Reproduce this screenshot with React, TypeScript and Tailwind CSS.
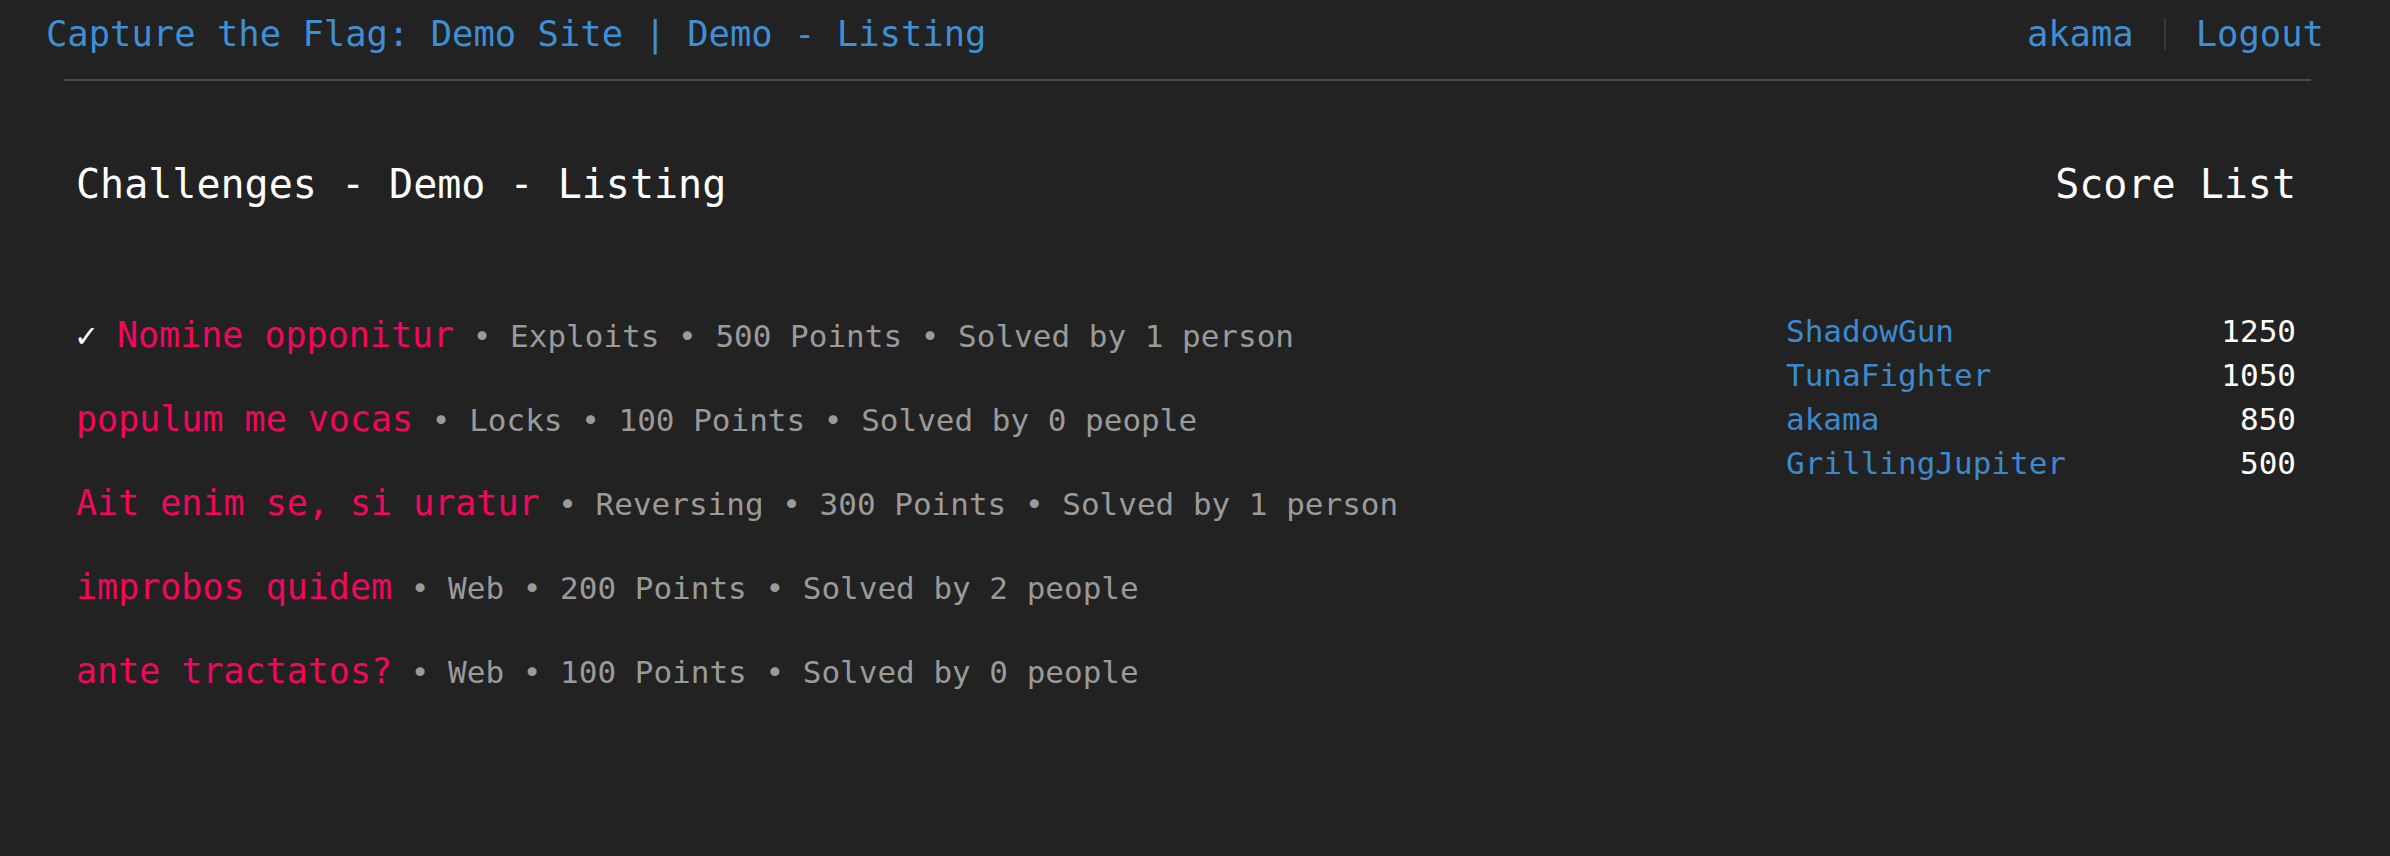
import React from 'react';

const mono = "font-['DejaVu_Sans_Mono','Liberation_Mono',monospace]";

const challenges = [
  { name: 'Nomine opponitur', category: 'Exploits', points: 500, solved: 'Solved by 1 person', done: true },
  { name: 'populum me vocas', category: 'Locks', points: 100, solved: 'Solved by 0 people', done: false },
  { name: 'Ait enim se, si uratur', category: 'Reversing', points: 300, solved: 'Solved by 1 person', done: false },
  { name: 'improbos quidem', category: 'Web', points: 200, solved: 'Solved by 2 people', done: false },
  { name: 'ante tractatos?', category: 'Web', points: 100, solved: 'Solved by 0 people', done: false },
];

const scores = [
  { name: 'ShadowGun', score: 1250 },
  { name: 'TunaFighter', score: 1050 },
  { name: 'akama', score: 850 },
  { name: 'GrillingJupiter', score: 500 },
];

function ChallengeRow({ c }: { key?: React.Key; c: (typeof challenges)[number] }) {
  return (
    <div className="h-[84px] flex items-center">
      <div className="whitespace-pre leading-[40px]">
        {c.done && <span className="text-white text-[34px]">✓ </span>}
        <a href="#" className="text-[#f2075b] text-[35px]">{c.name}</a>
        <span className="text-[#9a9a9a] text-[31px]">
          {' • '}{c.category}{' • '}{c.points} Points{' • '}{c.solved}
        </span>
      </div>
    </div>
  );
}

export default function App() {
  return (
    <div className={`min-h-screen bg-[#222222] ${mono}`}>
      <header className="flex items-center justify-between h-[68px] pl-[46px] pr-[66px] text-[35.5px] text-[#3f8fd4]">
        <a href="#">Capture the Flag: Demo Site | Demo - Listing</a>
        <div className="flex items-center">
          <a href="#">akama</a>
          <div className="w-[2px] h-[32px] bg-[#383838] mx-[30px]" />
          <a href="#">Logout</a>
        </div>
      </header>
      <div className="h-[2px] bg-[#4a4a4a] mt-[11px] ml-[64px] mr-[79px]" />

      <main className="flex pl-[76px] pr-[94px] pt-[79px] pb-[120px]">
        <section className="flex-1">
          <h1 className="text-white text-[40px] leading-[48px]">Challenges - Demo - Listing</h1>
          <div className="mt-[88px]">
            {challenges.map((c) => (
              <ChallengeRow key={c.name} c={c} />
            ))}
          </div>
        </section>

        <aside className="w-[510px]">
          <h2 className="text-white text-[40px] leading-[48px] text-right">Score List</h2>
          <div className="mt-[101px] text-[31px] leading-[44px]">
            {scores.map((s) => (
              <div key={s.name} className="flex justify-between">
                <a href="#" className="text-[#3b8ad0]">{s.name}</a>
                <span className="text-white">{s.score}</span>
              </div>
            ))}
          </div>
        </aside>
      </main>
    </div>
  );
}
